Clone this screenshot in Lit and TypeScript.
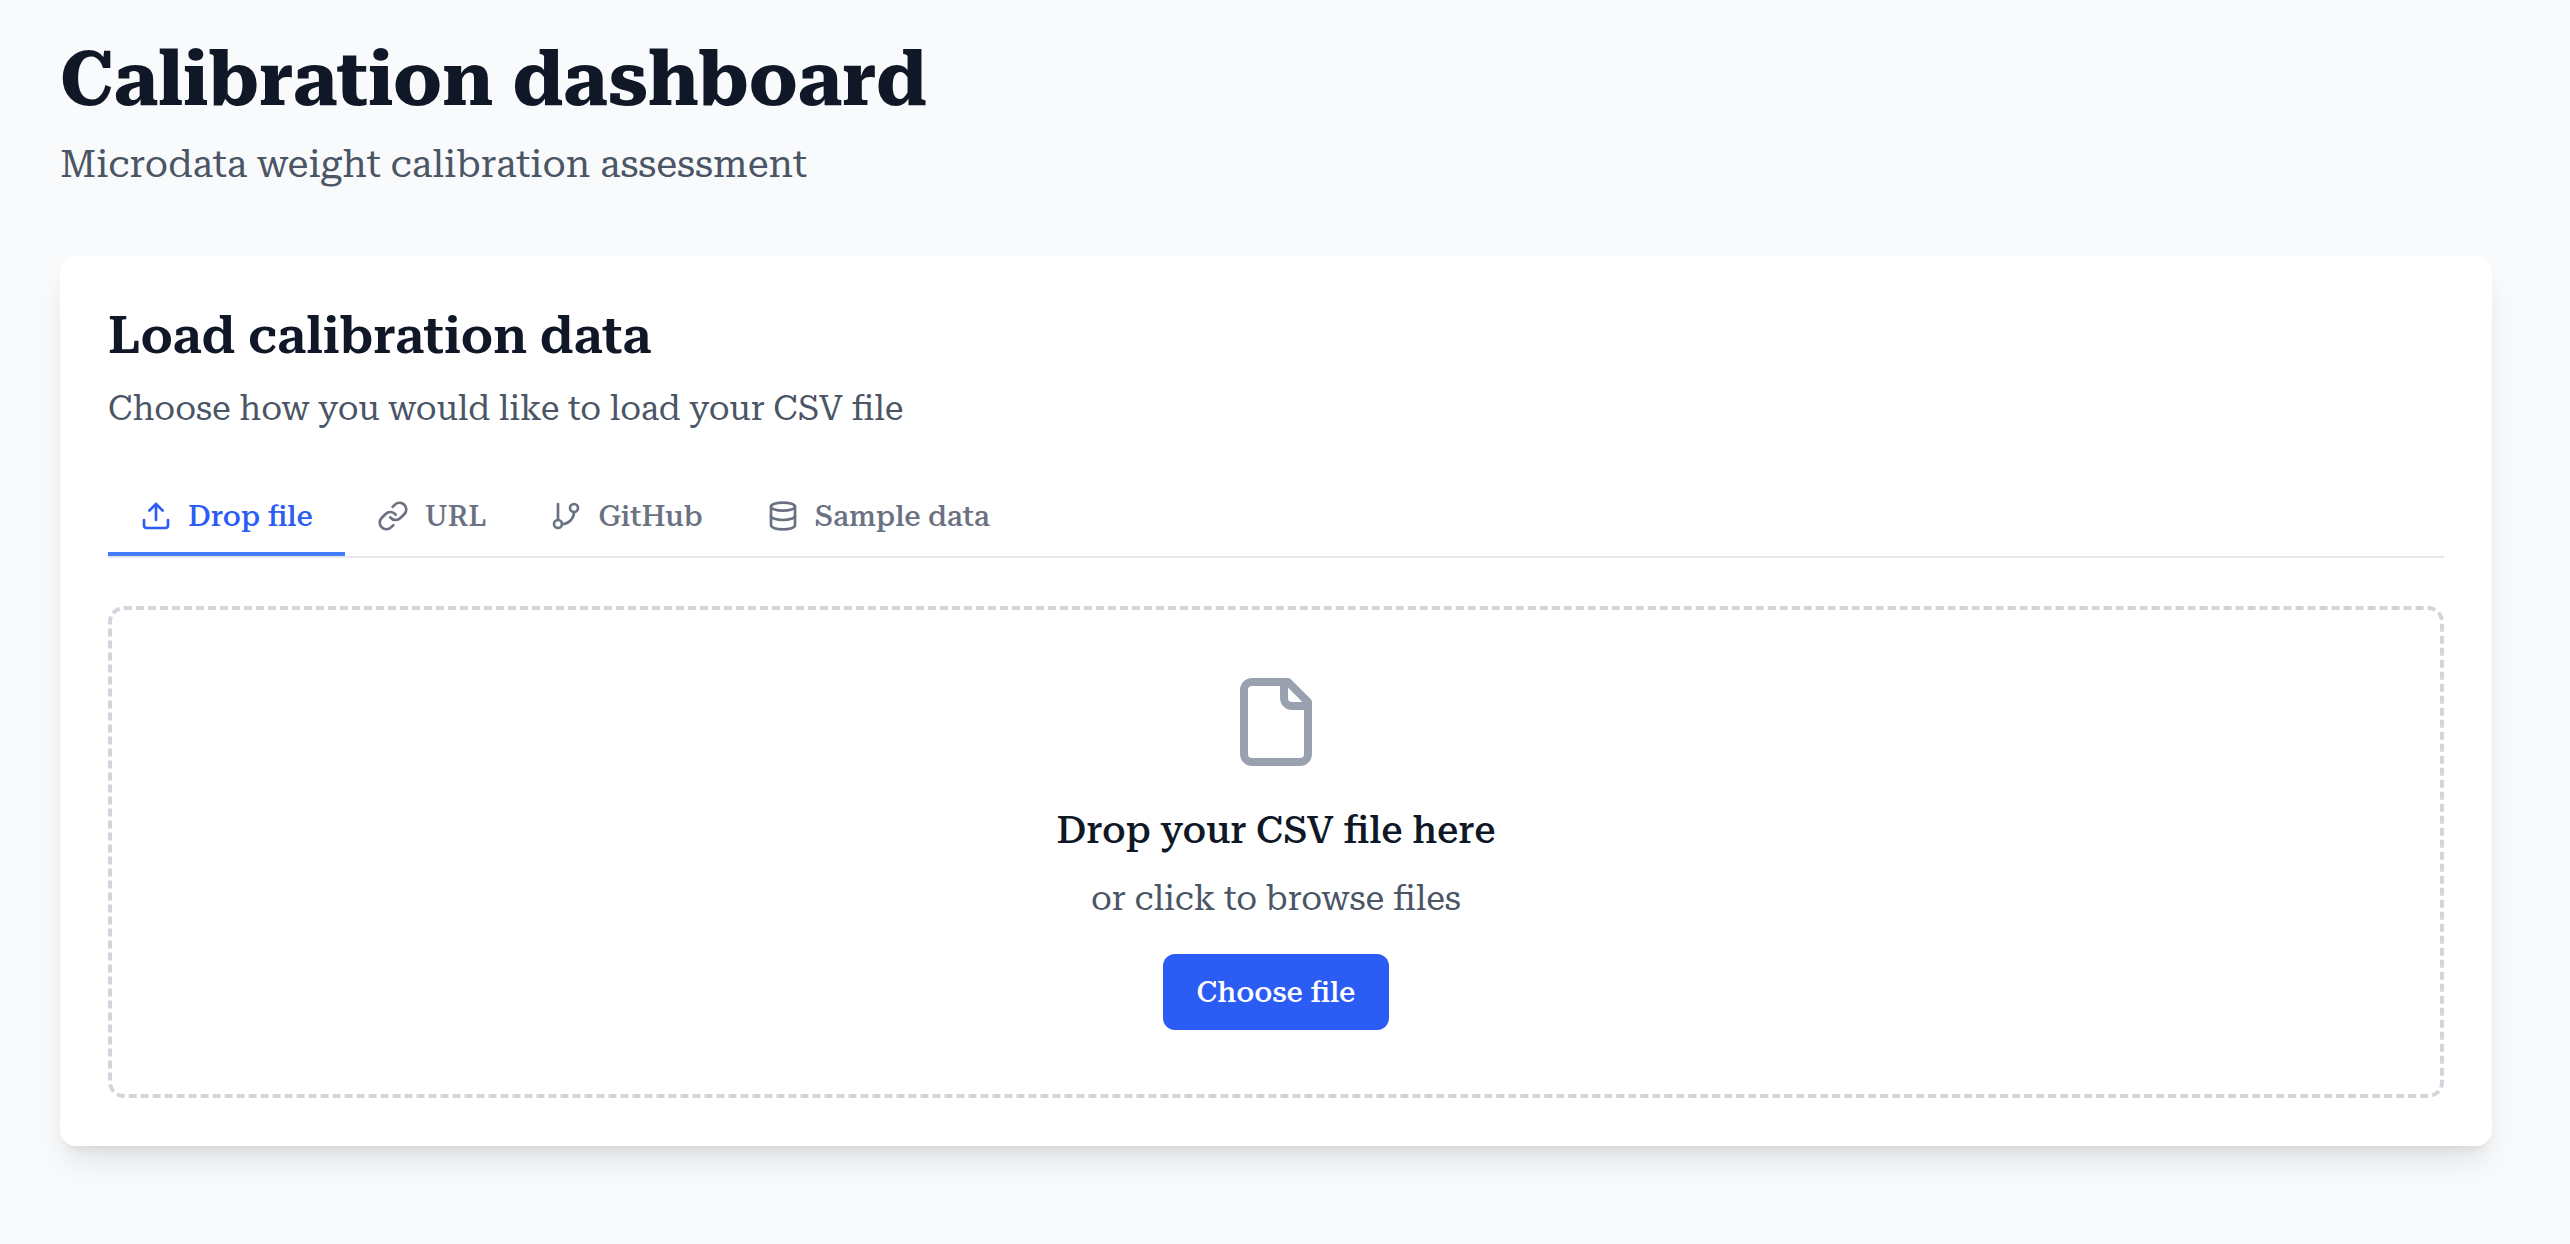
import { LitElement, html, css, svg } from "lit";
import { customElement, state, query } from "lit/decorators.js";
import { classMap } from "lit/directives/class-map.js";

const icons = {
  upload: svg`<path d="M12 3v12"/><path d="m17 8-5-5-5 5"/><path d="M21 15v4a2 2 0 0 1-2 2H5a2 2 0 0 1-2-2v-4"/>`,
  link: svg`<path d="M10 13a5 5 0 0 0 7.54.54l3-3a5 5 0 0 0-7.07-7.07l-1.72 1.71"/><path d="M14 11a5 5 0 0 0-7.54-.54l-3 3a5 5 0 0 0 7.07 7.07l1.71-1.71"/>`,
  branch: svg`<path d="M6 3v12"/><circle cx="18" cy="6" r="3"/><circle cx="6" cy="18" r="3"/><path d="M18 9a9 9 0 0 1-9 9"/>`,
  database: svg`<ellipse cx="12" cy="5" rx="9" ry="3"/><path d="M3 5v14a9 3 0 0 0 18 0V5"/><path d="M3 12a9 3 0 0 0 18 0"/>`,
  file: svg`<path d="M15 2H6a2 2 0 0 0-2 2v16a2 2 0 0 0 2 2h12a2 2 0 0 0 2-2V7Z"/><path d="M14 2v4a2 2 0 0 0 2 2h4"/>`,
};

type IconName = keyof typeof icons;

const tabs: { id: string; label: string; icon: IconName }[] = [
  { id: "drop", label: "Drop file", icon: "upload" },
  { id: "url", label: "URL", icon: "link" },
  { id: "github", label: "GitHub", icon: "branch" },
  { id: "sample", label: "Sample data", icon: "database" },
];

const icon = (name: IconName) => html`
  <svg class="icon" viewBox="0 0 24 24" aria-hidden="true">${icons[name]}</svg>
`;

@customElement("app-root")
export class AppRoot extends LitElement {
  static styles = css`
    :host {
      display: block;
      box-sizing: border-box;
      min-height: 100vh;
      padding: 40px 78px 40px 60px;
      background: #f9fafb;
      color: #101828;
      font-family: "Roboto Serif", "DejaVu Serif", serif;
    }
    h1, h2, h3, p { margin: 0; }
    .title {
      font-size: 76px;
      line-height: 80px;
      font-weight: 700;
    }
    .subtitle {
      margin-top: 16px;
      font-size: 38px;
      line-height: 56px;
      color: #4a5565;
    }
    .card {
      margin-top: 64px;
      padding: 48px;
      border-radius: 16px;
      background: #fff;
      box-shadow: 0 20px 30px -6px rgb(0 0 0 / 0.1), 0 8px 12px -8px rgb(0 0 0 / 0.1);
    }
    .card-title {
      font-size: 51px;
      line-height: 64px;
      font-weight: 600;
    }
    .text {
      margin-top: 16px;
      font-size: 34px;
      line-height: 48px;
      color: #4a5565;
    }
    .icon {
      flex: none;
      width: 32px;
      height: 32px;
      fill: none;
      stroke: currentColor;
      stroke-width: 2;
      stroke-linecap: round;
      stroke-linejoin: round;
    }
    .tabs {
      display: flex;
      margin-top: 48px;
      border-bottom: 2px solid #e5e7eb;
    }
    button {
      font-family: inherit;
      font-size: 29px;
      line-height: 40px;
      font-weight: 500;
      cursor: pointer;
    }
    .tab {
      display: flex;
      align-items: center;
      gap: 16px;
      padding: 16px 32px;
      border: 0;
      border-bottom: 4px solid transparent;
      background: none;
      color: #6a7282;
    }
    .tab.active {
      border-bottom-color: #447dfb;
      color: #2b5cf3;
    }
    .dropzone {
      display: flex;
      flex-direction: column;
      align-items: center;
      margin-top: 48px;
      padding: 64px;
      border: 4px dashed #d1d5dc;
      border-radius: 16px;
      text-align: center;
    }
    .dropzone .icon {
      width: 96px;
      height: 96px;
      color: #99a1af;
    }
    .drop-title {
      margin-top: 32px;
      font-size: 38px;
      line-height: 56px;
      font-weight: 500;
    }
    .choose {
      margin-top: 32px;
      padding: 16px 32px;
      border: 2px solid transparent;
      border-radius: 12px;
      background: #2b5cf3 border-box;
      color: #fff;
    }
  `;

  @state() private active = "drop";
  @query("input") private input!: HTMLInputElement;

  render() {
    return html`
      <header>
        <h1 class="title">Calibration dashboard</h1>
        <p class="subtitle">Microdata weight calibration assessment</p>
      </header>
      <main class="card">
        <h2 class="card-title">Load calibration data</h2>
        <p class="text">Choose how you would like to load your CSV file</p>
        <div class="tabs" role="tablist">
          ${tabs.map((t) => html`
            <button
              type="button"
              role="tab"
              aria-selected=${this.active === t.id}
              class=${classMap({ tab: true, active: this.active === t.id })}
              @click=${() => (this.active = t.id)}
            >${icon(t.icon)}<span>${t.label}</span></button>
          `)}
        </div>
        <section class="dropzone" role="tabpanel">
          ${icon("file")}
          <h3 class="drop-title">Drop your CSV file here</h3>
          <p class="text">or click to browse files</p>
          <input type="file" accept=".csv" aria-label="CSV file" hidden />
          <button type="button" class="choose" @click=${() => this.input.click()}>Choose file</button>
        </section>
      </main>
    `;
  }
}
